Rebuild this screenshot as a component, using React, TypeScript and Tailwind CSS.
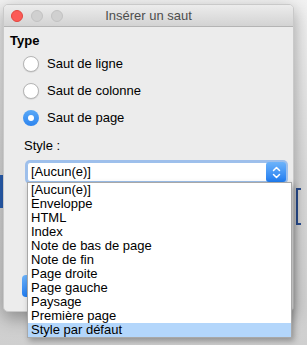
const styles = [
  "[Aucun(e)]",
  "Enveloppe",
  "HTML",
  "Index",
  "Note de bas de page",
  "Note de fin",
  "Page droite",
  "Page gauche",
  "Paysage",
  "Première page",
  "Style par défaut",
];

function Radio({ label, checked }: { label: string; checked?: boolean }) {
  return (
    <div className="flex items-center h-[27px] gap-[8px]">
      {checked ? (
        <span className="w-[16px] h-[16px] rounded-full bg-gradient-to-b from-[#5aa9f7] to-[#2d84ee] flex items-center justify-center">
          <span className="w-[6px] h-[6px] rounded-full bg-white" />
        </span>
      ) : (
        <span className="w-[16px] h-[16px] rounded-full bg-white border border-[#b5b5b5] shadow-[0_0.5px_1px_rgba(0,0,0,0.15)]" />
      )}
      <span>{label}</span>
    </div>
  );
}

export default function App() {
  return (
    <div
      className="relative w-[307px] h-[345px] overflow-hidden bg-gradient-to-b from-[#f2f2f2] via-[#dcdcdc] to-[#cfcfcf] text-[13px] text-black"
      style={{ fontFamily: '"Liberation Sans", Arial, sans-serif' }}
    >
      {/* document behind the dialog */}
      <div className="absolute left-0 top-[175px] w-[4px] h-[33px] bg-[#2a62b8]" />
      <div className="absolute left-[296px] top-[188px] w-[5px] h-[37px] border-l-2 border-y-2 border-[#2a4f94]" />

      {/* dialog */}
      <div className="absolute left-[3px] top-[4px] w-[291px] h-[308px] rounded-[5px] bg-[#ececec] shadow-[0_6px_18px_rgba(0,0,0,0.35)] border border-[#c9c9c9] overflow-hidden">
        <div className="relative h-[22px] flex items-center justify-center bg-gradient-to-b from-[#ececec] to-[#d3d3d3] border-b border-[#b4b4b4]">
          <div className="absolute left-[7px] top-[5px] flex gap-[8px]">
            <span className="w-[12px] h-[12px] rounded-full bg-[#fc5b57] border border-[#e2463f]" />
            <span className="w-[12px] h-[12px] rounded-full bg-[#d0d0d0] border border-[#c2c2c2]" />
            <span className="w-[12px] h-[12px] rounded-full bg-[#d0d0d0] border border-[#c2c2c2]" />
          </div>
          <span className="text-[#4d4d4d]">Insérer un saut</span>
        </div>

        <div className="pl-[6px] pt-[6px]">
          <div className="font-bold leading-[16px]">Type</div>
          <div className="pl-[13px] pt-[1px]">
            <Radio label="Saut de ligne" />
            <Radio label="Saut de colonne" />
            <Radio label="Saut de page" checked />
          </div>
          <div className="pl-[14px] pt-[7px] leading-[16px]">Style :</div>
          <div className="ml-[17px] mt-[8px] w-[259px] h-[20px] flex items-center bg-white rounded-[3px] border border-[#9dc0ec] shadow-[0_0_0_2px_rgba(95,155,235,0.55)]">
            <span className="flex-1 pl-[3px] leading-[16px]">[Aucun(e)]</span>
            <span className="w-[20px] h-[20px] -mr-px rounded-[3px] bg-gradient-to-b from-[#6cb3fa] to-[#1e7cf0] flex items-center justify-center">
              <svg width="9" height="13" viewBox="0 0 9 13" fill="none" stroke="white" strokeWidth="1.5" strokeLinecap="round" strokeLinejoin="round">
                <path d="M1.5 4.5 L4.5 1.5 L7.5 4.5" />
                <path d="M1.5 8.5 L4.5 11.5 L7.5 8.5" />
              </svg>
            </span>
          </div>
          <div className="ml-[12px] mt-[93px] w-[60px] h-[22px] rounded-[4px] bg-gradient-to-b from-[#6cb3fa] to-[#1e7cf0]" />
        </div>
      </div>

      {/* open list */}
      <div className="absolute left-[27px] top-[182px] w-[265px] bg-white border border-[#a8a8a8] shadow-[2px_3px_6px_rgba(0,0,0,0.3)] flex flex-col">
        {styles.map((s, i) => (
          <div
            key={s}
            className={`h-[14px] leading-[14px] pl-[3px] ${i === styles.length - 1 ? "bg-[#b3d6fb]" : ""}`}
          >
            {s}
          </div>
        ))}
      </div>
    </div>
  );
}
